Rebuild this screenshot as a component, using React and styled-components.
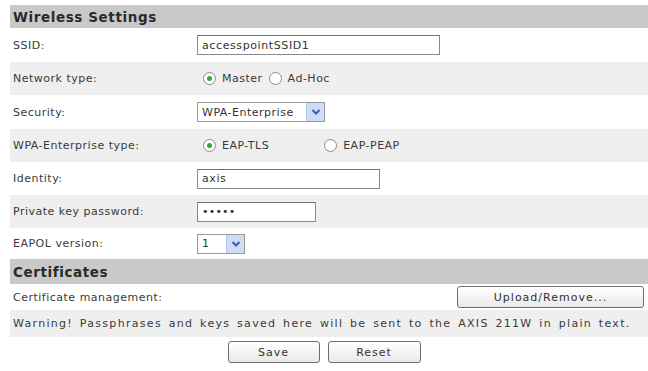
import React, { useState } from 'react';
import styled, { createGlobalStyle } from 'styled-components';

const GlobalStyle = createGlobalStyle`
    html, body {
        margin: 0;
        padding: 0;
        background: #fff;
        font-family: "DejaVu Sans", Verdana, sans-serif;
        color: #333;
    }
`;

const Page = styled.div`
    width: 648px;
    height: 371px;
    padding: 5px 0 0 10px;
    box-sizing: border-box;
    overflow: hidden;
`;

const SectionHead = styled.div`
    height: ${(p) => p.h}px;
    background: #c9c9c9;
    display: flex;
    align-items: center;
    padding-left: 3px;
    font-size: 13.5px;
    font-weight: bold;
    color: #2a2a2a;
    letter-spacing: 0.6px;
`;

const Row = styled.div`
    height: ${(p) => p.h}px;
    background: ${(p) => (p.shade ? '#efefef' : '#fff')};
    display: flex;
    align-items: center;
    font-size: 11px;
    letter-spacing: 0.5px;
`;

const Label = styled.div`
    width: 184px;
    padding-left: 3px;
    flex-shrink: 0;
    color: #3a3a3a;
`;

const Warning = styled.div`
    padding-left: 3px;
    color: #3a3a3a;
    letter-spacing: 1.3px;
    word-spacing: 2px;
    white-space: nowrap;
`;

const Value = styled.div`
    flex: 1;
    display: flex;
    align-items: center;
    justify-content: ${(p) => (p.right ? 'flex-end' : 'flex-start')};
`;

const TextBox = styled.div`
    width: ${(p) => p.w}px;
    height: 20px;
    border: 1px solid #8a8a8a;
    border-top-color: #6f6f6f;
    background: #fff;
    display: flex;
    align-items: center;
    padding-left: 4px;
    box-sizing: border-box;
    font-size: 11px;
    letter-spacing: ${(p) => p.ls || 0.6}px;
    color: #333;
`;

const SelectBox = styled.div`
    width: ${(p) => p.w}px;
    height: 20px;
    border: 1px solid #9a9a9a;
    background: #fff;
    display: flex;
    align-items: center;
    justify-content: space-between;
    padding-left: 4px;
    box-sizing: border-box;
    font-size: 11px;
    color: #333;
`;

const Arrow = styled.span`
    width: 17px;
    height: 18px;
    background: #cfdcf5;
    border-left: 1px solid #b8cae9;
    display: flex;
    align-items: center;
    justify-content: center;
`;

const RadioGroup = styled.div`
    display: flex;
    align-items: center;
    padding-left: 6px;
`;

const RadioItem = styled.label`
    display: flex;
    align-items: center;
    margin-right: ${(p) => p.gap || 6}px;
    color: #3a3a3a;
`;

const RadioDot = styled.span`
    width: 13px;
    height: 13px;
    border-radius: 50%;
    border: 1px solid #8b8b8b;
    background: #fff;
    box-sizing: border-box;
    margin-right: 6px;
    display: flex;
    align-items: center;
    justify-content: center;
    &::after {
        content: '';
        width: 5px;
        height: 5px;
        border-radius: 50%;
        background: ${(p) => (p.checked ? '#3aa33a' : 'transparent')};
    }
`;

const Button = styled.button`
    width: ${(p) => p.w}px;
    height: 22px;
    border: 1px solid #6e6e6e;
    border-radius: 3px;
    background: linear-gradient(#ffffff, #e9e9e9);
    font-family: inherit;
    font-size: 11px;
    letter-spacing: 1px;
    color: #333;
    padding: 0;
    margin: 0 4px;
`;

const Buttons = styled.div`
    height: 30px;
    display: flex;
    align-items: center;
    justify-content: center;
    padding-right: 10px;
`;

const Chevron = () => (
    <svg width="10" height="8" viewBox="0 0 10 8">
        <path d="M1.5 2 L5 5.5 L8.5 2" fill="none" stroke="#3b5fae" strokeWidth="2" />
    </svg>
);

function Radio({ checked, label, gap, onClick }) {
    return (
        <RadioItem gap={gap} onClick={onClick}>
            <RadioDot checked={checked} />
            {label}
        </RadioItem>
    );
}

export default function App() {
    const [netType, setNetType] = useState('master');
    const [eapType, setEapType] = useState('tls');

    return (
        <Page>
            <GlobalStyle />
            <SectionHead h={23}>Wireless Settings</SectionHead>
            <Row h={34}>
                <Label>SSID:</Label>
                <Value>
                    <TextBox w={243}>accesspointSSID1</TextBox>
                </Value>
            </Row>
            <Row h={33} shade>
                <Label>Network type:</Label>
                <RadioGroup>
                    <Radio checked={netType === 'master'} label="Master" onClick={() => setNetType('master')} />
                    <Radio checked={netType === 'adhoc'} label="Ad-Hoc" onClick={() => setNetType('adhoc')} />
                </RadioGroup>
            </Row>
            <Row h={34}>
                <Label>Security:</Label>
                <Value>
                    <SelectBox w={128}>
                        WPA-Enterprise
                        <Arrow><Chevron /></Arrow>
                    </SelectBox>
                </Value>
            </Row>
            <Row h={33} shade>
                <Label>WPA-Enterprise type:</Label>
                <RadioGroup>
                    <Radio gap={55} checked={eapType === 'tls'} label="EAP-TLS" onClick={() => setEapType('tls')} />
                    <Radio checked={eapType === 'peap'} label="EAP-PEAP" onClick={() => setEapType('peap')} />
                </RadioGroup>
            </Row>
            <Row h={33}>
                <Label>Identity:</Label>
                <Value>
                    <TextBox w={183}>axis</TextBox>
                </Value>
            </Row>
            <Row h={33} shade>
                <Label>Private key password:</Label>
                <Value>
                    <TextBox w={119} ls={0.2}>•••••</TextBox>
                </Value>
            </Row>
            <Row h={31}>
                <Label>EAPOL version:</Label>
                <Value>
                    <SelectBox w={48}>
                        1
                        <Arrow><Chevron /></Arrow>
                    </SelectBox>
                </Value>
            </Row>
            <SectionHead h={25}>Certificates</SectionHead>
            <Row h={26}>
                <Label>Certificate management:</Label>
                <Value right>
                    <Button w={187}>Upload/Remove...</Button>
                </Value>
            </Row>
            <Row h={27} shade>
                <Warning>
                    Warning! Passphrases and keys saved here will be sent to the AXIS 211W in plain text.
                </Warning>
            </Row>
            <Buttons>
                <Button w={92}>Save</Button>
                <Button w={93}>Reset</Button>
            </Buttons>
        </Page>
    );
}
